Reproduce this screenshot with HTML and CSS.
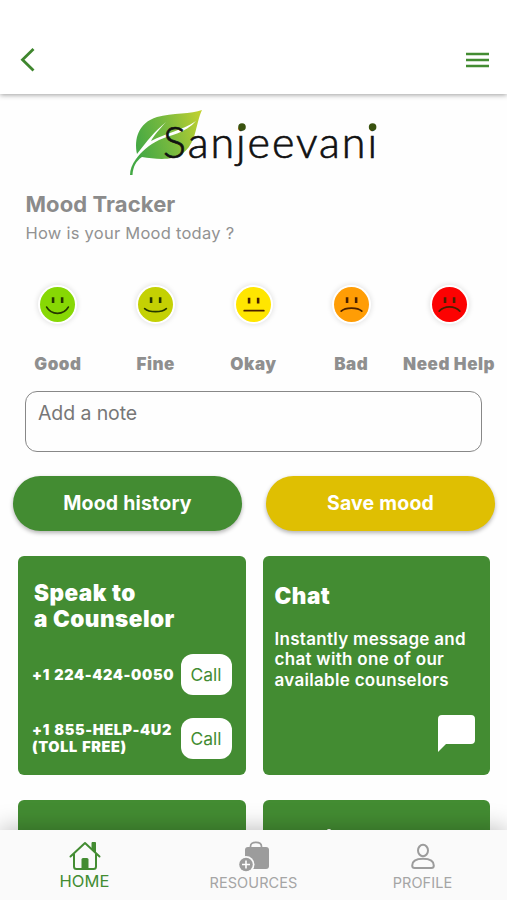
FILE: index.html
```html
<!DOCTYPE html>
<html lang="en">
<head>
<meta charset="utf-8">
<title>Sanjeevani</title>
<link rel="stylesheet" href="styles.css">
</head>
<body>
<div class="app">
  <header class="topbar">
    <svg class="back" width="16" height="26" viewBox="0 0 16 26"><path d="M14.500 2 L3.500 12.800 L14.500 23.600" fill="none" stroke="#3f862e" stroke-width="2.800"/></svg>
    <svg class="menu" width="23" height="16" viewBox="0 0 23 16"><path d="M0 2H23M0 8H23M0 14H23" stroke="#438c32" stroke-width="2.300"/></svg>
  </header>
  <main class="content">
    <svg class="logo" width="270" height="85" viewBox="0 0 270 85">
      <defs><linearGradient id="leaf" x1="0" y1=".3" x2="1" y2="0"><stop offset="0" stop-color="#43a844"/><stop offset=".45" stop-color="#76b93f"/><stop offset="1" stop-color="#c5d22e"/></linearGradient></defs>
      <path d="M82 10C72 14 52 13 37 17C18 23 14 39 17 54C28 40 34 32 46 22C39 30 34 35 31 41C46 33 61 31 76 21C66 33 50 35 39 40C29 45 21 52 16 59C12 64 10 70 10 75L12.500 75C13 67 16 61 22 57C35 59 52 61 62 54C77 43 75 25 82 10Z" fill="url(#leaf)"/>
      <text class="wordmark" x="43" y="57.500" textLength="214" lengthAdjust="spacing">Sanjeevani</text>
      <circle cx="122" cy="27" r="3.800" fill="#39520f"/><circle cx="252.600" cy="27" r="3.800" fill="#39520f"/>
    </svg>
    <h1 class="title">Mood Tracker</h1>
    <p class="subtitle">How is your Mood today ?</p>
    <div class="moods">
      <div class="mood"><svg class="face good" viewBox="0 0 34 34"><path class="eyes" d="M12.700 10v5.500M21.500 10v5.500"/><path class="mouth" d="M6.500 19.500C11 27.500 23 27.500 27.500 19.500"/></svg><span>Good</span></div>
      <div class="mood"><svg class="face fine" viewBox="0 0 34 34"><path class="eyes" d="M12.700 10v5.500M21.500 10v5.500"/><path class="mouth" d="M6.500 21C11 25 23 25 27.500 21"/></svg><span>Fine</span></div>
      <div class="mood"><svg class="face okay" viewBox="0 0 34 34"><path class="eyes" d="M12.700 10.500v5.500M21.500 10.500v5.500"/><path class="mouth" d="M8 23H27"/></svg><span>Okay</span></div>
      <div class="mood"><svg class="face bad" viewBox="0 0 34 34"><path class="eyes" d="M12.700 10v5.500M21.500 10v5.500"/><path class="mouth" d="M7 23.500C11 19.500 23 19.500 27 23.500"/></svg><span>Bad</span></div>
      <div class="mood"><svg class="face help" viewBox="0 0 34 34"><path class="eyes" d="M12.700 10v5.500M21.500 10v5.500"/><path class="mouth" d="M7 23.500C12 18 22 18 27 23.500"/></svg><span>Need Help</span></div>
    </div>
    <div class="note">Add a note</div>
    <div class="actions"><button class="btn history">Mood history</button><button class="btn save">Save mood</button></div>
    <div class="cards">
      <section class="card counselor">
        <h2>Speak to<br>a Counselor</h2>
        <div class="phone first"><span>+1 224-424-0050</span><button class="call">Call</button></div>
        <div class="phone"><span>+1 855-HELP-4U2<br>(TOLL FREE)</span><button class="call">Call</button></div>
      </section>
      <section class="card chat">
        <h2>Chat</h2>
        <p>Instantly message and<br>chat with one of our<br>available counselors</p>
        <svg class="bubble" width="37" height="37" viewBox="0 0 37 37"><path d="M4 0H33Q37 0 37 4V25Q37 29 33 29H8L0 37V4Q0 0 4 0Z" fill="#fff"/></svg>
      </section>
      <section class="card"></section>
      <section class="card peek"><i></i></section>
    </div>
  </main>
  <nav class="tabs">
    <a class="tab home">
      <svg width="32" height="30" viewBox="0 0 32 30" fill="none" stroke="#438c32" stroke-width="2"><path d="M1.500 15.500L16 2L30.500 15.500M5 13V25.500Q5 28 7.500 28H24.500Q27 28 27 25.500V13" stroke-linejoin="round" stroke-linecap="round"/><path d="M23 1.500H26.500V11L23 8Z" fill="#438c32" stroke-width="1"/><path d="M12.500 28V18.500Q12.500 17 14 17H18Q19.500 17 19.500 18.500V28Z" fill="#438c32" stroke="none"/></svg>
      <span>HOME</span>
    </a>
    <a class="tab">
      <svg width="32" height="31" viewBox="0 0 32 31"><path d="M12.500 7V5.500Q12.500 1.300 18 1.300T23.500 5.500V7" fill="none" stroke="#9c9c9c" stroke-width="1.700"/><path d="M10 6H28Q31 6 31 9V25Q31 28 28 28H7V9Q7 6 10 6Z" fill="#9c9c9c"/><circle cx="8" cy="23.500" r="8.500" fill="#fafafa"/><circle cx="8" cy="23.500" r="6.800" fill="#9c9c9c"/><path d="M4 23.500H12M8 19.500V27.500" stroke="#fff" stroke-width="1.600"/></svg>
      <span>RESOURCES</span>
    </a>
    <a class="tab">
      <svg width="26" height="31" viewBox="0 0 26 31" fill="none" stroke="#9c9c9c" stroke-width="2"><ellipse cx="13" cy="9.500" rx="5" ry="5.700"/><path d="M2.200 24.500C2.200 19.500 7 17.700 13 17.700S23.800 19.500 23.800 24.500Q23.800 27 21.300 27H4.700Q2.200 27 2.200 24.500Z"/></svg>
      <span>PROFILE</span>
    </a>
  </nav>
</div>
</body>
</html>
```
FILE: styles.css
```css
* { box-sizing: border-box; }
body { margin: 0; font-family: Inter, "Liberation Sans", sans-serif; background: #fefefe; }
h1, h2, p { margin: 0; }
button { border: 0; padding: 0; font: inherit; }
.app { width: 507px; height: 900px; overflow: hidden; display: flex; flex-direction: column; }
.topbar { height: 94px; flex: none; display: flex; justify-content: space-between; padding: 47px 18px 0 19px; background: #fff; box-shadow: 0 1px 5px rgba(0,0,0,.38); z-index: 1; }
.menu { margin-top: 5px; }
.content { flex: 1; min-height: 0; overflow: hidden; padding-top: 6px; }
.logo { display: block; margin-left: 120px; }
.wordmark { font-family: Lato, sans-serif; font-size: 43px; font-weight: 300; fill: #111; stroke: #111; stroke-width: .7px; }
.title { margin: 6px 0 0 25.500px; font-size: 22px; line-height: 27px; font-weight: 700; letter-spacing: .1px; color: #8b8b8b; }
.subtitle { margin: 4px 0 0 25.500px; font-size: 16.500px; line-height: 22px; letter-spacing: .25px; color: #929292; }
.moods { margin: 43px 0 0 9px; display: grid; grid-template-columns: repeat(5, 97.800px); }
.mood { display: flex; flex-direction: column; align-items: center; font-size: 17px; line-height: 22px; font-weight: 900; letter-spacing: .55px; color: #8f8f8f; white-space: nowrap; }
.mood span { margin-top: 31px; }
.face { width: 35px; height: 35px; border-radius: 50%; box-shadow: 0 0 0 2px #fff, 0 0 5px 3px rgba(0,0,0,.1); }
.eyes { fill: none; stroke: #4a2000; stroke-width: 2.500; }
.mouth { fill: none; stroke: #4a2000; stroke-width: 1.700; stroke-linecap: round; }
.good { background: #87d804; }
.good path, .fine path { stroke: #253800; }
.fine { background: #c4d103; }
.okay { background: #ffe600; }
.bad { background: #ff9d05; }
.help { background: #fc0202; }
.note { margin: 15.500px 25px 0; height: 61px; border: 1.500px solid #888; border-radius: 12px; padding: 9.500px 12px; font-size: 19.500px; line-height: 24px; letter-spacing: -.1px; color: #777; }
.actions { display: flex; gap: 24px; padding: 24.500px 12px 0 13px; }
.btn { flex: 1; height: 55px; padding-bottom: 1px; border-radius: 28px; color: #fff; font-size: 19.500px; font-weight: 700; letter-spacing: .2px; box-shadow: 0 2px 4px rgba(0,0,0,.3); }
.history { background: #438c32; }
.save { background: #dfbf02; }
.cards { display: grid; grid-template-columns: 227.500px 227.500px; grid-auto-rows: 219.500px; gap: 24.500px 17px; margin: 24.600px 0 0 18px; }
.card { border-radius: 6px; background: #438c32; color: #fff; }
.card h2 { font-size: 22.500px; line-height: 26px; font-weight: 900; letter-spacing: .5px; }
.counselor { padding: 24px 14px 0 14px; }
.counselor h2 { padding-left: 2px; }
.phone { display: flex; align-items: center; justify-content: space-between; height: 41px; margin-top: 23px; font-size: 14.500px; line-height: 17px; font-weight: 900; letter-spacing: .6px; word-spacing: 1px; white-space: nowrap; }
.phone.first { margin-top: 22px; }
.call { width: 51px; height: 41px; flex: none; border-radius: 12px; background: #fff; color: #438c32; font-size: 17.500px; font-weight: 400; letter-spacing: 0; }
.chat { padding: 27px 15px 0 12px; display: flex; flex-direction: column; }
.chat p { margin-top: 20px; font-size: 17px; line-height: 20.700px; font-weight: 600; letter-spacing: .3px; white-space: nowrap; }
.bubble { align-self: flex-end; margin-top: 24.500px; }
.peek { display: flex; padding: 29px 0 0 64px; }
.peek i { width: 4px; height: 3px; border-radius: 2px; background: #fff; }
.tabs { height: 70px; flex: none; display: grid; grid-template-columns: repeat(3, 1fr); background: #fafafa; box-shadow: 0 -2px 22px rgba(0,0,0,.25); z-index: 1; }
.tab { display: flex; flex-direction: column; align-items: center; padding-top: 11px; font-size: 14.500px; line-height: 18px; letter-spacing: .1px; color: #a5a5a5; }
.tab span { margin-top: 2px; }
.home { font-size: 16.500px; color: #438c32; }
.home span { margin-top: 1px; }
```
